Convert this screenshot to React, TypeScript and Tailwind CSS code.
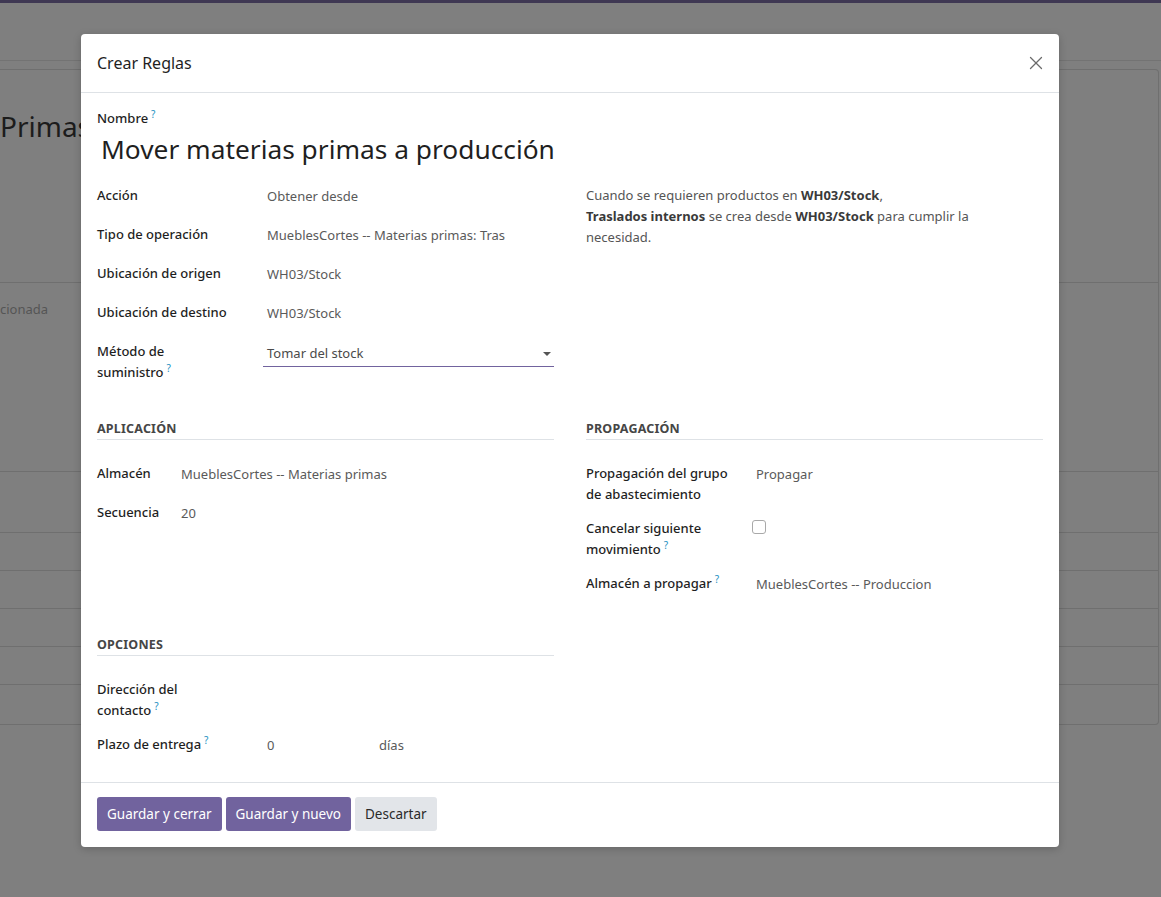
import { X } from 'lucide-react';

const FONT = { fontFamily: '"Noto Sans", "Open Sans", sans-serif' };

function Help() {
  return <sup className="ml-[3px] text-[10px] font-normal text-[#1c8fbf]">?</sup>;
}

function Row({
  label,
  help,
  labelWidth = 'w-[170px]',
  children,
}: {
  label: React.ReactNode;
  help?: boolean;
  labelWidth?: string;
  children?: React.ReactNode;
}) {
  return (
    <div className="mb-[13px] flex min-h-[26px]">
      <div className={`${labelWidth} shrink-0 pr-2 leading-[21px] font-medium text-[#1f1f1f]`}>
        {label}
        {help && <Help />}
      </div>
      <div className="min-w-0 flex-1 pt-[1px] leading-[21px] text-[#5a5a5a]">{children}</div>
    </div>
  );
}

function SectionTitle({ children }: { children: React.ReactNode }) {
  return (
    <div className="mb-[23px] border-b border-[#dee2e6] text-[12.5px] leading-[20px] font-bold tracking-[0.2px] text-[#464646] uppercase">
      {children}
    </div>
  );
}

/** Dimmed Odoo page sitting behind the modal. */
function Backdrop() {
  return (
    <div className="flex h-full flex-col bg-[#7f7f7f]">
      <div className="h-[3px] bg-[#3f3853]" />
      <div className="h-[58px] border-b border-[#737373]" />
      <div className="mt-[8px] mr-[2px] flex h-[656px] flex-col rounded-tr-[4px] rounded-br-[4px] border-t border-r border-b border-[#6f6f6f]">
        <div className="h-[213px] border-b border-[#6f6f6f] pt-[36px] text-[28px] leading-[40px] text-[#1c1c1c]">
          Primas
        </div>
        <div className="h-[188px] pt-[17px] text-[13px] text-[#555]">cionada</div>
        {[61, 38, 38, 38, 38].map((h, i) => (
          <div key={i} style={{ height: h }} className="border-t border-[#6f6f6f]" />
        ))}
        <div className="flex-1 border-t border-[#6f6f6f]" />
      </div>
    </div>
  );
}

export default function App() {
  return (
    <div className="relative h-[897px] w-[1161px] overflow-hidden text-[13px]" style={FONT}>
      <Backdrop />

      <div className="absolute top-[34px] left-[81px] flex h-[813px] w-[978px] flex-col rounded-[4px] bg-white shadow-[0_2px_8px_rgba(0,0,0,0.2)]">
        {/* header */}
        <div className="flex h-[59px] shrink-0 items-center justify-between border-b border-[#dee2e6] pr-[12px] pl-[16px]">
          <div className="text-[16px] text-[#1f1f1f]">Crear Reglas</div>
          <X size={22} strokeWidth={1.4} className="text-[#6b6b6b]" />
        </div>

        {/* body */}
        <div className="flex-1 px-[16px] pt-[15px]">
          <div className="leading-[21px] font-medium text-[#1f1f1f]">
            Nombre
            <Help />
          </div>
          <div className="mt-[2px] pl-[4px] text-[26.3px] leading-[36px] text-[#1f1f1f]">
            Mover materias primas a producción
          </div>

          <div className="mt-[18px] grid grid-cols-2 gap-x-[32px]">
            <div>
              <Row label="Acción">Obtener desde</Row>
              <Row label="Tipo de operación">
                <div className="w-[238px] overflow-hidden whitespace-nowrap">
                  MueblesCortes -- Materias primas: Traslados internos
                </div>
              </Row>
              <Row label="Ubicación de origen">WH03/Stock</Row>
              <Row label="Ubicación de destino">WH03/Stock</Row>
              <div className="mb-[13px] flex">
                <div className="w-[166px] shrink-0 pr-2 leading-[21px] font-medium text-[#1f1f1f]">
                  Método de
                  <br />
                  suministro
                  <Help />
                </div>
                <div className="flex h-[26px] flex-1 items-center justify-between border-b border-[#71639e] pr-[3px] pl-[4px] text-[#4a4a4a]">
                  <span>Tomar del stock</span>
                  <span className="h-0 w-0 border-t-[4px] border-r-[4px] border-l-[4px] border-t-[#555] border-r-transparent border-l-transparent" />
                </div>
              </div>
            </div>
            <div className="leading-[21px] text-[#555]">
              Cuando se requieren productos en <b className="text-[#3a3a3a]">WH03/Stock</b>,
              <br />
              <b className="text-[#3a3a3a]">Traslados internos</b> se crea desde{' '}
              <b className="text-[#3a3a3a]">WH03/Stock</b> para cumplir la
              <br />
              necesidad.
            </div>

            <div className="mt-[23px]">
              <SectionTitle>Aplicación</SectionTitle>
              <Row label="Almacén" labelWidth="w-[84px]">
                MueblesCortes -- Materias primas
              </Row>
              <Row label="Secuencia" labelWidth="w-[84px]">
                20
              </Row>
            </div>
            <div className="mt-[23px]">
              <SectionTitle>Propagación</SectionTitle>
              <Row
                label={
                  <>
                    Propagación del grupo
                    <br />
                    de abastecimiento
                  </>
                }
              >
                Propagar
              </Row>
              <Row
                label={
                  <>
                    Cancelar siguiente
                    <br />
                    movimiento
                  </>
                }
                help
              >
                <div className="mt-[1px] ml-[-4px] h-[14px] w-[14px] rounded-[3px] border border-[#a9a9a9] bg-white" />
              </Row>
              <Row label="Almacén a propagar" help>
                MueblesCortes -- Produccion
              </Row>
            </div>

            <div className="mt-[23px]">
              <SectionTitle>Opciones</SectionTitle>
              <Row
                label={
                  <>
                    Dirección del
                    <br />
                    contacto
                  </>
                }
                help
              />
              <Row label="Plazo de entrega" help>
                <div className="flex">
                  <span className="w-[112px]">0</span>
                  <span>días</span>
                </div>
              </Row>
            </div>
            <div />
          </div>
        </div>

        {/* footer */}
        <div className="flex shrink-0 gap-[4px] border-t border-[#dee2e6] px-[16px] pt-[14px] pb-[16px]">
          <button className="h-[34px] rounded-[3px] bg-[#71639e] px-[10px] text-[13.5px] text-white">
            Guardar y cerrar
          </button>
          <button className="h-[34px] rounded-[3px] bg-[#71639e] px-[10px] text-[13.5px] text-white">
            Guardar y nuevo
          </button>
          <button className="h-[34px] rounded-[3px] bg-[#e2e5e9] px-[10px] text-[13.5px] text-[#2a2a2a]">
            Descartar
          </button>
        </div>
      </div>
    </div>
  );
}
